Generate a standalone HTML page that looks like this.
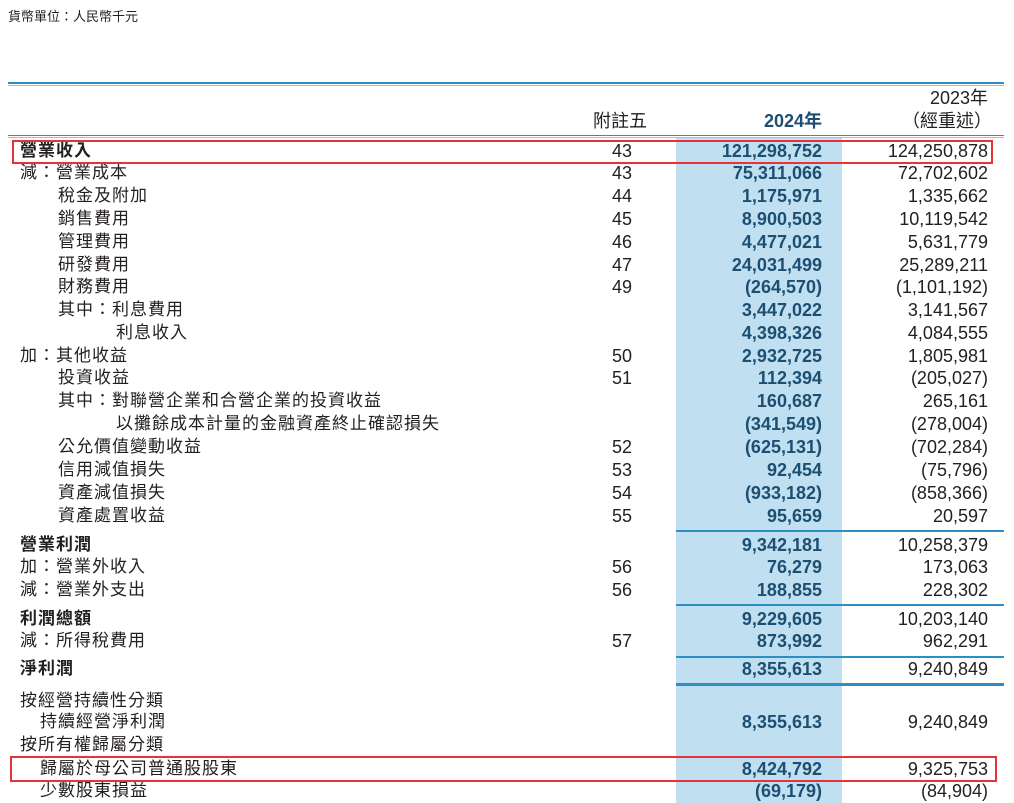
<!DOCTYPE html>
<html><head><meta charset="utf-8"><style>
*{margin:0;padding:0;box-sizing:border-box}
body{width:1014px;height:803px;background:#fff;position:relative;overflow:hidden;font-family:"Liberation Sans","Noto Sans CJK TC",sans-serif;color:#231f20}
.a{position:absolute;white-space:nowrap}
.t{font-size:17px;line-height:20px}
.n{font-size:18px;line-height:20px;text-align:right}
.b{font-weight:bold}
.c24{color:#1d4f73;font-weight:bold}
.ln{position:absolute;height:2px;background:#2a8fc2}
.ln2{position:absolute;height:1px;background:#8cc7e4}
</style></head><body>
<div class="a" style="left:8px;top:6px;font-size:13px">貨幣單位：人民幣千元</div>
<div class="ln" style="left:8px;top:82px;width:996px"></div>
<div class="ln2" style="left:8px;top:85px;width:996px"></div>
<div style="position:absolute;left:676px;top:137px;width:166px;height:666px;background:#c0e0f1"></div>
<div class="a n" style="left:840px;width:148px;top:88px">2023年</div>
<div class="a n" style="left:840px;width:152px;top:111px">（經重述）</div>
<div class="a t" style="left:593px;top:111px;font-size:18px">附註五</div>
<div class="a n c24" style="left:680px;width:142px;top:111px">2024年</div>
<div class="ln" style="left:8px;top:135px;width:996px;height:1px;background:#2a8fc2"></div>
<div class="ln2" style="left:8px;top:137px;width:996px"></div>
<div id="rows"></div>
<div class="ln" style="left:676px;top:530px;width:328px"></div>
<div class="ln" style="left:676px;top:604px;width:328px"></div>
<div class="ln" style="left:676px;top:656px;width:328px"></div>
<div class="ln" style="left:676px;top:683px;width:328px;height:3px"></div>
<div style="position:absolute;left:12px;top:140px;width:981px;height:24px;border:2px solid #e8323a"></div>
<div style="position:absolute;left:10px;top:756px;width:987px;height:26px;border:2px solid #e8323a"></div>
<script>
var R=[
[151,20,"營業收入",1,"43","121,298,752","124,250,878"],
[173,20,"減：營業成本",0,"43","75,311,066","72,702,602"],
[196,58,"稅金及附加",0,"44","1,175,971","1,335,662"],
[219,58,"銷售費用",0,"45","8,900,503","10,119,542"],
[242,58,"管理費用",0,"46","4,477,021","5,631,779"],
[265,58,"研發費用",0,"47","24,031,499","25,289,211"],
[287,58,"財務費用",0,"49","(264,570)","(1,101,192)"],
[310,58,"其中：利息費用",0,"","3,447,022","3,141,567"],
[333,116,"利息收入",0,"","4,398,326","4,084,555"],
[356,20,"加：其他收益",0,"50","2,932,725","1,805,981"],
[378,58,"投資收益",0,"51","112,394","(205,027)"],
[401,58,"其中：對聯營企業和合營企業的投資收益",0,"","160,687","265,161"],
[424,116,"以攤餘成本計量的金融資產終止確認損失",0,"","(341,549)","(278,004)"],
[447,58,"公允價值變動收益",0,"52","(625,131)","(702,284)"],
[470,58,"信用減值損失",0,"53","92,454","(75,796)"],
[493,58,"資產減值損失",0,"54","(933,182)","(858,366)"],
[516,58,"資產處置收益",0,"55","95,659","20,597"],
[545,20,"營業利潤",1,"","9,342,181","10,258,379"],
[567,20,"加：營業外收入",0,"56","76,279","173,063"],
[590,20,"減：營業外支出",0,"56","188,855","228,302"],
[619,20,"利潤總額",1,"","9,229,605","10,203,140"],
[641,20,"減：所得稅費用",0,"57","873,992","962,291"],
[669,20,"淨利潤",1,"","8,355,613","9,240,849"],
[701,20,"按經營持續性分類",0,"","",""],
[722,40,"持續經營淨利潤",0,"","8,355,613","9,240,849"],
[745,20,"按所有權歸屬分類",0,"","",""],
[769,40,"歸屬於母公司普通股股東",0,"","8,424,792","9,325,753"],
[791,40,"少數股東損益",0,"","(69,179)","(84,904)"]];
var h="";R.forEach(function(r){var y=r[0]-10;
h+='<div class="a t'+(r[3]?' b':'')+'" style="left:'+r[1]+'px;top:'+y+'px;letter-spacing:1px">'+r[2]+'</div>';
if(r[4])h+='<div class="a n" style="left:592px;width:40px;top:'+y+'px">'+r[4]+'</div>';
if(r[5])h+='<div class="a n c24" style="left:680px;width:142px;top:'+y+'px">'+r[5]+'</div>';
if(r[6])h+='<div class="a n" style="left:840px;width:148px;top:'+y+'px">'+r[6]+'</div>';});
document.getElementById("rows").innerHTML=h;
</script>
</body></html>
